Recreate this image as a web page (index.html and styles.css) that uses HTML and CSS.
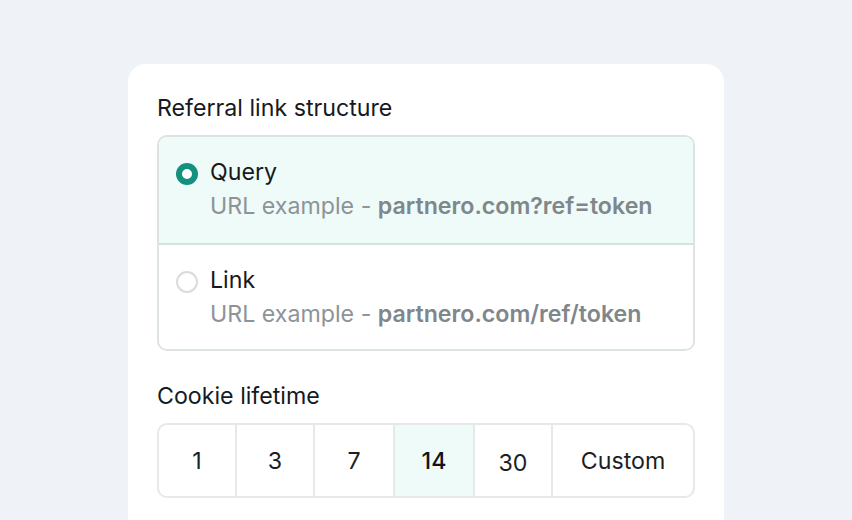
FILE: index.html
```html
<!DOCTYPE html>
<html lang="en">
<head>
  <meta charset="UTF-8">
  <meta name="viewport" content="width=device-width, initial-scale=1.0">
  <title>Referral settings</title>
  <link rel="stylesheet" href="styles.css">
</head>
<body>
  <div class="card">
    <div class="field-label">Referral link structure</div>
    <div class="options">
      <label class="option selected">
        <span class="radio"></span>
        <span class="option-text">
          <span class="option-title">Query</span>
          <span class="option-hint">URL example - <b>partnero.com?ref=token</b></span>
        </span>
      </label>
      <label class="option">
        <span class="radio"></span>
        <span class="option-text">
          <span class="option-title">Link</span>
          <span class="option-hint">URL example - <b>partnero.com/ref/token</b></span>
        </span>
      </label>
    </div>

    <div class="field-label cookie-label">Cookie lifetime</div>
    <div class="segments">
      <div class="segment">1</div>
      <div class="segment">3</div>
      <div class="segment">7</div>
      <div class="segment active">14</div>
      <div class="segment low">30</div>
      <div class="segment">Custom</div>
    </div>
  </div>
</body>
</html>
```

FILE: styles.css
```css
body {
  margin: 0;
  height: 520px;
  overflow: hidden;
  background-color: #eff3f8;
  font-family: Inter, "Noto Sans", sans-serif;
  color: #16191d;
}
.card {
  margin: 64px 0 0 128px;
  width: 596px;
  height: 456px;
  box-sizing: border-box;
  padding: 28px 29px 0 29px;
  background: #fff;
  border-radius: 18px 18px 0 0;
}
.field-label {
  font-size: 23.2px;
  line-height: 32px;
  margin-bottom: 11px;
}
.options {
  border: 2px solid #dde3e2;
  border-radius: 10px;
  overflow: hidden;
}
.option {
  display: flex;
  align-items: flex-start;
  gap: 12px;
  height: 106px;
  box-sizing: border-box;
  padding: 19px 18px 0 16px;
  background: #fff;
}
.option + .option {
  border-top: 2px solid #d3e3df;
}
.option.selected {
  background: #eefbf8;
}
.radio {
  flex: none;
  width: 18px;
  height: 18px;
  margin: 7px 0 0 1px;
  border: 2px solid #d9dcdf;
  border-radius: 50%;
  background: #fff;
}
.selected .radio {
  width: 10px;
  height: 10px;
  border: 6px solid #13907e;
}
.option-text {
  display: flex;
  flex-direction: column;
}
.option-title {
  font-size: 23.2px;
  line-height: 32px;
}
.option-hint {
  font-size: 23.2px;
  line-height: 36px;
  color: #8d9397;
}
.option-hint b {
  font-weight: 600;
  color: #80878b;
}
.cookie-label {
  margin-top: 29px;
  margin-bottom: 11px;
}
.segments {
  display: grid;
  grid-template-columns: 76px 78px 80px 80px 78px 1fr;
  height: 75px;
  border: 2px solid #e6e8ea;
  border-radius: 10px;
  overflow: hidden;
  box-sizing: border-box;
}
.segment {
  display: flex;
  align-items: center;
  justify-content: center;
  font-size: 23.2px;
  color: #1c1f23;
}
.segment + .segment {
  border-left: 2px solid #e6e8ea;
}
.segment.active {
  background: #effbf8;
  font-weight: 500;
  color: #111417;
}
.segment.low {
  padding-top: 5px;
}
```
